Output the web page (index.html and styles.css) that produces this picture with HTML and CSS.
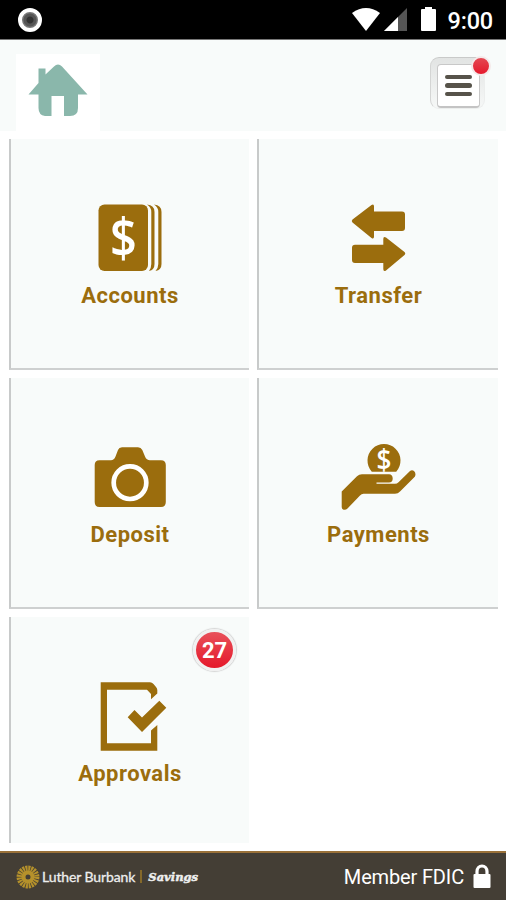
FILE: index.html
```html
<!DOCTYPE html>
<html lang="en">
<head>
    <meta charset="UTF-8">
    <meta name="viewport" content="width=device-width, initial-scale=1.0">
    <title>Luther Burbank Savings</title>
    <link rel="stylesheet" href="styles.css">
</head>
<body>
    <!-- Status bar -->
    <div class="status-bar">
        <span class="record-dot"></span>
        <svg class="status-icons" width="90" height="26" viewBox="0 0 90 26">
            <path d="M1 6Q15 -4 29 6L15 24Z" fill="#fff"/>
            <path d="M56 1V24H33Z" fill="#555"/>
            <path d="M47 10V24H33Z" fill="#fff"/>
            <path d="M74 0h7v2h3q1 0 1 1v20q0 1-1 1H71q-1 0-1-1V3q0-1 1-1h3z" fill="#fff"/>
        </svg>
        <span class="clock">9:00</span>
    </div>

    <div class="header">
        <div class="home-tab">
            <svg width="60" height="54" viewBox="0 0 60 54">
                <path d="M.5 30.500L10.500 19V4.500h7v6L26 2.500q4-4 8 0L59.500 30.500H50V44q0 8-8 8h-6V32H23.500v20H17q-6.500-1-6.500-8V30.500z" fill="#8ab7ab"/>
            </svg>
        </div>
        <button class="menu-button">
            <span class="menu-inner">
                <span class="menu-line"></span>
                <span class="menu-line"></span>
                <span class="menu-line"></span>
            </span>
            <span class="menu-dot"></span>
        </button>
    </div>

    <div class="tiles">
        <div class="tile">
            <svg class="tile-icon" viewBox="0 0 80 80">
                <rect x="8.500" y="6.500" width="49.500" height="66.500" rx="6"/>
                <path d="M57 6.500Q64.500 7 64.500 14V66Q64.500 72 59 73Q61.300 70 61.300 66V14Q61.300 9 57 6.500Z"/>
                <path d="M64 6.500Q71.500 7 71.500 14V66Q71.500 72 65.500 73Q68.300 70 68.300 66V14Q68.300 9 64 6.500Z"/>
                <text class="dollar" transform="translate(33.500 59) scale(.87 1)" font-size="54">$</text>
            </svg>
            <div class="tile-text">Accounts</div>
        </div>

        <div class="tile">
            <svg class="tile-icon" viewBox="0 0 80 80">
                <path d="M14.500 21.500L33.500 7Q36 5.500 36 8.500V13.500H64Q67 13.500 67 16.500V30Q67 33 64 33H36V38.500Q36 41.500 33.500 40L14.500 24.500Q13 23 14.500 21.500Z"/>
                <path d="M66.500 54L48 39.500Q45.300 38 45.300 41V46.700H17Q14 46.700 14 49.700V62Q14 65 17 65H45.300V71Q45.300 74 48 72.500L66.500 57Q68 55.500 66.500 54Z"/>
            </svg>
            <div class="tile-text">Transfer</div>
        </div>

        <div class="tile">
            <svg class="tile-icon" viewBox="0 0 80 80">
                <path d="M9.500 23.300H21Q24 23.300 25.500 19.500L28 13Q29 10.300 32 10.300H48Q51 10.300 52.300 13L55 19.500Q56.500 23.300 60 23.300H71Q75.800 23.300 75.800 28V65Q75.800 70 71 70H9.500Q4.700 70 4.700 65V28Q4.700 23.300 9.500 23.300Z"/>
                <circle class="lens" cx="40" cy="45.700" r="16.300"/>
            </svg>
            <div class="tile-text">Deposit</div>
        </div>

        <div class="tile">
            <svg class="tile-icon" viewBox="0 0 80 80">
                <path d="M33.800 34.700A16.500 16.500 0 1 1 58.200 34.700Z"/>
                <text class="dollar" transform="translate(46 32.800) scale(.9 1)" font-size="29">$</text>
                <path d="M3.700 54.500L19 39.300Q21 37.300 24 37.300H51Q54.700 37.500 54.700 41.500Q54.700 45.500 51 45.500H38.500V46.800H57Q59 46.800 60.500 45.300L72 34Q74 32.500 76 34Q78.300 36 77 39.500L62 54.500Q60 56.800 57 56.800H25.500Q23.500 56.800 22 58.500L9.500 71.500Q7.500 73.500 5 72.500Q3.700 71.700 3.700 70Z"/>
            </svg>
            <div class="tile-text">Payments</div>
        </div>

        <div class="tile tile-last">
            <svg class="tile-icon" viewBox="0 0 80 80">
                <path d="M10.700 6.300H60Q62 6.300 63.500 8L66 11Q67.300 12.500 67.300 14V17.500L61 23.300V18L57 13.700H17V67.300H61V54.500L67.300 49V74.700H10.700Z"/>
                <path d="M37.700 41.300L44.500 34L52 41.500L69.300 24.700L76.300 31.700L52 56Z"/>
            </svg>
            <div class="tile-text">Approvals</div>
            <div class="badge">27</div>
        </div>
    </div>

    <div class="footer">
        <div class="brand">
            <svg class="sun" width="24" height="24" viewBox="-12 -12 24 24">
                <circle r="8.200" stroke-width="6.500" stroke-dasharray="1.900 .676"/>
                <circle r="4.500" stroke-width="4"/>
            </svg>
            <span class="brand-name">Luther Burbank</span>
            <span class="brand-line"></span>
            <span class="brand-savings">Savings</span>
        </div>
        <div class="fdic">
            <span>Member FDIC</span>
            <svg width="18" height="25" viewBox="0 0 18 25">
                <path d="M4 11V7.500a5 5.500 0 0 1 10 0V11" fill="none" stroke="#fff" stroke-width="3.200"/>
                <rect x="0.500" y="10" width="17" height="14" rx="1" fill="#fff"/>
            </svg>
        </div>
    </div>
</body>
</html>
```
FILE: styles.css
```css
* {
    box-sizing: border-box;
}

body {
    margin: 0;
    height: 900px;
    font-family: Roboto, "Liberation Sans", sans-serif;
    background: #fff;
    display: flex;
    flex-direction: column;
    overflow: hidden;
}

.status-bar {
    height: 40px;
    padding: 0 13px 0 18px;
    background: #000;
    border-bottom: 1px solid #777;
    display: flex;
    align-items: center;
}

.record-dot {
    width: 24px;
    height: 24px;
    border-radius: 50%;
    border: 4px solid #fff;
    background: radial-gradient(circle, #333 0 3px, #555 4px 6px, #777 7px);
}

.status-icons {
    margin: 1px 7px 0 auto;
}

.clock {
    color: #fff;
    font-size: 23.5px;
    font-weight: 500;
    line-height: 40px;
    letter-spacing: -0.2px;
    padding-top: 3px;
}

.header {
    height: 91px;
    padding: 14px 16px 0 16px;
    background: #f8fbfa;
    display: flex;
    justify-content: space-between;
    align-items: flex-start;
}

.home-tab {
    width: 84px;
    height: 77px;
    padding: 10px 0 0 12px;
    background: #fff;
}

.menu-button {
    position: relative;
    width: 55px;
    height: 52px;
    margin: 3px 5px 0 0;
    padding: 6px 0 0 6px;
    border: 1px solid #eceeed;
    border-top-color: #c9cac9;
    border-left-color: #d4d5d4;
    border-radius: 9px;
    background: linear-gradient(#e2e4e3, #f6f8f7);
}

.menu-inner {
    width: 43px;
    height: 44px;
    border: 1px solid #c8c8c8;
    border-bottom: 2px solid #c4c4c4;
    border-radius: 4px;
    background: #fff;
    display: flex;
    flex-direction: column;
    justify-content: center;
    align-items: center;
    gap: 4px;
}

.menu-line {
    width: 27px;
    height: 4.6px;
    border-radius: 3px;
    background: #57534a;
}

.menu-dot {
    position: absolute;
    top: -2px;
    right: -7px;
    width: 20px;
    height: 20px;
    border: 2px solid #f4e9e9;
    border-radius: 50%;
    background: linear-gradient(#e44852, #e5192c);
}

.tiles {
    display: grid;
    grid-template-columns: 240px 241px;
    grid-template-rows: 231px 231px 226px;
    gap: 8px;
    padding: 8px 0 0 9px;
}

.tile {
    position: relative;
    padding-top: 59px;
    background: #f8fbfa;
    border-left: 2px solid #c8caca;
    border-bottom: 2px solid #ced0d0;
    display: flex;
    flex-direction: column;
    align-items: center;
}

.tile-last {
    border-bottom: none;
}

.tile-icon {
    width: 80px;
    height: 80px;
    fill: #9b6d0d;
}

.tile:nth-child(even) .tile-icon {
    margin-right: 1px;
}

.dollar {
    fill: #fff;
    font-family: "Open Sans", sans-serif;
    font-weight: 600;
    text-anchor: middle;
}

.lens {
    fill: none;
    stroke: #fff;
    stroke-width: 4.7;
}

.tile-text {
    margin-top: 4px;
    color: #9b6d0d;
    font-size: 22px;
    font-weight: 700;
    letter-spacing: 0.5px;
    line-height: 28px;
}

.badge {
    position: absolute;
    top: 12px;
    right: 13px;
    width: 43px;
    height: 42px;
    border: 3px solid #f1f1f1;
    border-radius: 50%;
    box-shadow: 0 0 1px 1px #d5d5d5;
    background: linear-gradient(#e8505a, #e5182a);
    color: #fff;
    font-size: 22px;
    font-weight: 700;
    line-height: 37px;
    text-align: center;
}

.footer {
    height: 49px;
    margin-top: auto;
    padding: 0 15px 0 16px;
    background: #443e35;
    border-top: 2px solid #9a7139;
    display: flex;
    justify-content: space-between;
    align-items: center;
}

.brand {
    display: flex;
    align-items: center;
    color: #eee;
}

.sun {
    fill: none;
    stroke: #b5912b;
}

.brand-name {
    margin-left: 2px;
    font-family: Lato, sans-serif;
    font-size: 14px;
    letter-spacing: -0.1px;
    -webkit-text-stroke: 0.3px #eee;
}

.brand-line {
    width: 2px;
    height: 13px;
    margin: 0 6px 0 5px;
    background: #85692a;
}

.brand-savings {
    font-family: "DejaVu Serif", serif;
    font-size: 11.5px;
    font-weight: 700;
    font-style: italic;
    -webkit-text-stroke: 0.5px #eee;
}

.fdic {
    display: flex;
    align-items: center;
    gap: 9px;
    color: #fff;
    font-size: 20px;
    letter-spacing: -0.15px;
}
```
